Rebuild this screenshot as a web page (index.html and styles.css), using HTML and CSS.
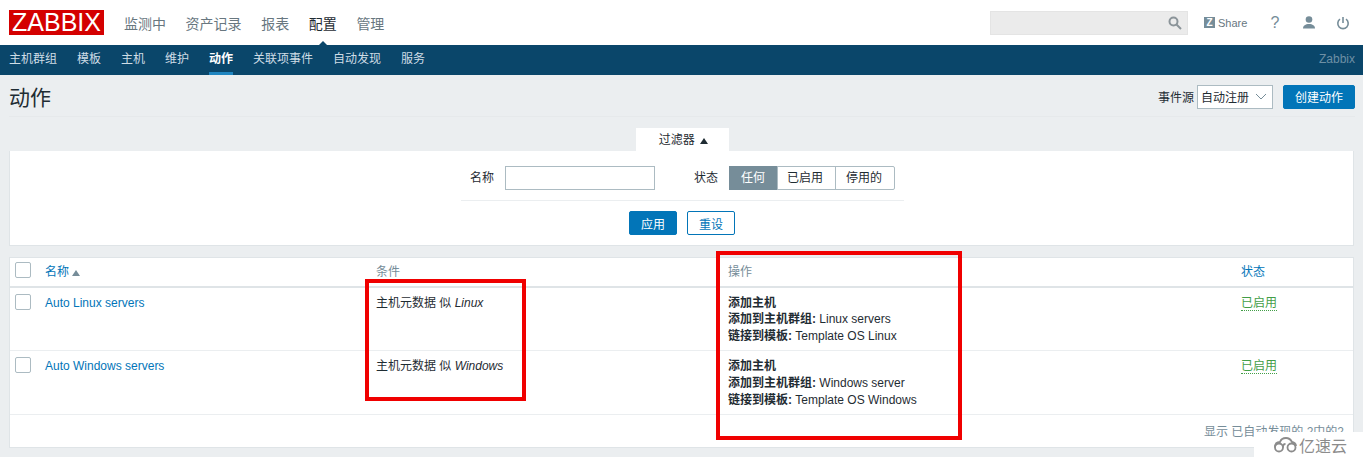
FILE: index.html
```html
<!DOCTYPE html>
<html lang="zh">

<head>
    <meta charset="UTF-8">
    <meta name="viewport" content="width=device-width">
    <title>动作</title>
    <link rel="stylesheet" href="styles.css">
</head>

<body>
    <header class="topbar">
        <a href="#" class="logo">ZABBIX</a>
        <nav class="mainnav">
            <a href="#">监测中</a>
            <a href="#">资产记录</a>
            <a href="#">报表</a>
            <a href="#" class="current">配置</a>
            <a href="#">管理</a>
        </nav>
        <div class="tools">
            <div class="search">
                <svg width="14" height="14" viewBox="0 0 14 14" fill="none" stroke="#8b9499" stroke-width="2">
                    <circle cx="5.500" cy="5.500" r="4"/>
                    <path d="M8.500 8.500 13 13"/>
                </svg>
            </div>
            <a href="#" class="share"><span class="share-z">Z</span>Share</a>
            <a href="#" class="tool help">?</a>
            <a href="#" class="tool">
                <svg width="14" height="13" viewBox="0 0 14 13" fill="#768d99">
                    <circle cx="7" cy="3.500" r="3.300"/>
                    <path d="M1 12.500c0-3 2.500-4.500 6-4.500s6 1.500 6 4.500z"/>
                </svg>
            </a>
            <a href="#" class="tool">
                <svg width="14" height="14" viewBox="0 0 14 14" fill="none" stroke="#768d99" stroke-width="1.600">
                    <path d="M4 3.200a5.200 5.200 0 1 0 6 0"/>
                    <path d="M7 1v6"/>
                </svg>
            </a>
        </div>
    </header>

    <nav class="subnav">
        <a href="#">主机群组</a>
        <a href="#">模板</a>
        <a href="#">主机</a>
        <a href="#">维护</a>
        <a href="#" class="active">动作</a>
        <a href="#">关联项事件</a>
        <a href="#">自动发现</a>
        <a href="#">服务</a>
        <span class="server">Zabbix</span>
    </nav>

    <main class="content">
        <div class="title-row">
            <h1>动作</h1>
            <label class="source">事件源
                <span class="select">自动注册
                    <svg width="12" height="7" viewBox="0 0 12 7" fill="none" stroke="#768d99">
                        <path d="M1 1l5 5 5-5"/>
                    </svg>
                </span>
            </label>
            <button class="btn" type="button">创建动作</button>
        </div>

        <div class="filter-tab">过滤器 <span class="arrow-up"></span></div>
        <form class="filter">
            <div class="filter-fields">
                <label class="field-label">名称</label>
                <input class="text-input" type="text">
                <label class="field-label status-label">状态</label>
                <div class="segments">
                    <span class="on">任何</span>
                    <span>已启用</span>
                    <span>停用的</span>
                </div>
            </div>
            <div class="filter-actions">
                <button class="btn" type="button">应用</button>
                <button class="btn btn-alt" type="button">重设</button>
            </div>
        </form>

        <div class="panel">
            <table>
                <thead>
                    <tr>
                        <th class="col-check"><span class="checkbox"></span></th>
                        <th class="col-name"><a href="#">名称</a><span class="sort"></span></th>
                        <th class="col-cond">条件</th>
                        <th class="col-oper">操作</th>
                        <th><a href="#">状态</a></th>
                    </tr>
                </thead>
                <tbody>
                    <tr>
                        <td><span class="checkbox"></span></td>
                        <td><a href="#">Auto Linux servers</a></td>
                        <td>主机元数据 似 <i>Linux</i></td>
                        <td><b>添加主机</b><br><b>添加到主机群组:</b> Linux servers<br><b>链接到模板:</b> Template OS Linux</td>
                        <td><a href="#" class="enabled">已启用</a></td>
                    </tr>
                    <tr>
                        <td><span class="checkbox"></span></td>
                        <td><a href="#">Auto Windows servers</a></td>
                        <td>主机元数据 似 <i>Windows</i></td>
                        <td><b>添加主机</b><br><b>添加到主机群组:</b> Windows server<br><b>链接到模板:</b> Template OS Windows</td>
                        <td><a href="#" class="enabled">已启用</a></td>
                    </tr>
                </tbody>
            </table>
            <div class="paging">显示 已自动发现的 2中的2</div>
        </div>
    </main>

    <!-- marcas rojas y marca de agua encima de la captura -->
    <div class="mark mark-cond"></div>
    <div class="mark mark-oper"></div>
    <div class="watermark">
        <svg width="25" height="16" viewBox="0 0 25 16" fill="none" stroke="#8c8c8c" stroke-width="1.800">
            <circle cx="6" cy="10.500" r="4"/>
            <circle cx="18.500" cy="10.500" r="4"/>
            <path d="M2 10.500C2 6 5 5 7 5c1-3 4-4 6-4 3 0 5 2 6 4 2 0 4 2 4 4"/>
            <path d="M10 10.500C10 8 11 7 12.500 7"/>
        </svg>
        <span>亿速云</span>
    </div>
</body>

</html>
```

FILE: styles.css
```css
* {
    box-sizing: border-box;
}

html,
body {
    height: 457px;
    overflow: hidden;
}

body {
    margin: 0;
    position: relative;
    font-family: "Liberation Sans", "Noto Sans CJK SC", sans-serif;
    font-size: 12px;
    color: #1f2c33;
    background-color: #ebeef0;
}

a {
    text-decoration: none;
    color: inherit;
}

.topbar {
    height: 45px;
    background-color: #fff;
    display: flex;
    align-items: center;
    padding: 0 9px;
}

.logo {
    width: 95px;
    height: 25px;
    background-color: #d40000;
    color: #fff;
    font-size: 25px;
    line-height: 25px;
    text-align: center;
}

.mainnav {
    display: flex;
    gap: 19.600px;
    margin-left: 20px;
    font-size: 14px;
    color: #68777f;
}

.mainnav a.current {
    color: #1f2c33;
    position: relative;
}

.mainnav a.current::after {
    content: "";
    position: absolute;
    left: 7px;
    bottom: -15px;
    border: 7px solid transparent;
    border-top: 0;
    border-bottom-color: #0a466a;
}

.tools {
    margin-left: auto;
    display: flex;
    align-items: center;
}

.search {
    width: 198px;
    height: 24px;
    background-color: #ebebeb;
    border: 1px solid #e4e4e4;
    display: flex;
    align-items: center;
    justify-content: flex-end;
    padding-right: 5px;
}

.share {
    display: flex;
    align-items: center;
    gap: 3px;
    margin-left: 16px;
    width: 50px;
    font-size: 11px;
    color: #68777f;
}

.share-z {
    width: 11px;
    height: 11px;
    flex-shrink: 0;
    background-color: #768d99;
    color: #fff;
    font-size: 10px;
    font-weight: bold;
    line-height: 11px;
    text-align: center;
}

.tool {
    width: 14px;
    margin-left: 20px;
    display: flex;
    justify-content: center;
    color: #768d99;
}

.tool:last-child {
    margin-right: 4px;
}

.help {
    font-size: 16px;
    margin-left: 14px;
}

.subnav {
    height: 30px;
    background-color: #0a466a;
    color: #cfdde6;
    display: flex;
    gap: 20px;
    padding: 0 8px 0 9px;
    line-height: 29px;
}

.subnav a.active {
    color: #fff;
    font-weight: bold;
    box-shadow: inset 0 -3px 0 #1f85c0;
}

.server {
    margin-left: auto;
    color: #6e90a5;
}

.content {
    padding: 0 9px;
}

.title-row {
    height: 42px;
    margin: 0 -1px 11px 0;
    display: flex;
    align-items: center;
    gap: 10px;
    padding-top: 2px;
    border-bottom: 1px solid #e6e9eb;
}

h1 {
    margin: -2px auto 0 0;
    font-size: 21px;
    font-weight: normal;
    color: #1f2c33;
}

.source {
    display: flex;
    align-items: center;
    gap: 3px;
}

.select {
    width: 76px;
    height: 24px;
    background-color: #fff;
    border: 1px solid #acbbc2;
    display: flex;
    align-items: center;
    justify-content: space-between;
    padding: 0 5px 0 3px;
}

.btn {
    height: 24px;
    padding: 0 11px;
    font: inherit;
    color: #fff;
    background-color: #0275b8;
    border: 1px solid #0275b8;
    border-radius: 2px;
}

.btn-alt {
    color: #0275b8;
    background-color: #fff;
}

.filter-tab {
    width: 93px;
    height: 23px;
    margin: 0 auto;
    background-color: #fff;
    text-align: center;
    line-height: 25px;
    position: relative;
    left: 1px;
    padding-left: 2px;
}

.arrow-up {
    display: inline-block;
    margin-left: 2px;
    border: 4px solid transparent;
    border-top: 0;
    border-bottom: 6px solid #1f2c33;
}

.filter {
    height: 95px;
    background-color: #fff;
    border: 1px solid #dfe4e7;
    border-top: 0;
    margin-bottom: 11px;
    display: flex;
    flex-direction: column;
    align-items: center;
}

.filter-fields {
    width: 443px;
    height: 50px;
    padding-top: 15px;
    display: flex;
    align-items: flex-start;
    border-bottom: 1px solid #ebeef0;
    position: relative;
    left: 1px;
}

.field-label {
    margin-left: 9px;
    margin-right: 11px;
    line-height: 24px;
}

.text-input {
    width: 150px;
    height: 24px;
    border: 1px solid #acbbc2;
    background-color: #fff;
}

.status-label {
    margin-left: 39px;
    margin-right: 11px;
}

.segments {
    display: flex;
    height: 24px;
    line-height: 22px;
    border: 1px solid #acbbc2;
    border-radius: 2px;
}

.segments span {
    padding: 0 12px 0 9px;
    border-left: 1px solid #acbbc2;
}

.segments span:last-child {
    padding: 0 12px 0 10px;
}

.segments .on {
    background-color: #768d99;
    color: #fff;
    margin: -1px 0 -1px -1px;
    line-height: 24px;
    padding: 0 12px;
    border-left: 0;
}

.filter-actions {
    display: flex;
    gap: 10px;
    padding: 10px 0 0 1px;
}

.panel {
    height: 191px;
    background-color: #fff;
    border: 1px solid #dfe4e7;
}

table {
    width: 100%;
    border-collapse: separate;
    border-spacing: 0;
    table-layout: fixed;
}

th {
    height: 30px;
    font-weight: normal;
    text-align: left;
    color: #768d99;
    border-bottom: 2px solid #dfe4e7;
    vertical-align: middle;
    padding: 0 0 4px;
}

th a,
td a {
    color: #0275b8;
}

td {
    height: 63px;
    padding: 7px 0 5px;
    line-height: 16.400px;
    vertical-align: top;
    border-bottom: 1px solid #ebeef0;
}

tbody tr:last-child td {
    height: 64px;
    line-height: 17px;
}

.col-check {
    width: 35px;
}

.col-name {
    width: 331px;
}

.col-cond {
    width: 352px;
}

.col-oper {
    width: 513px;
}

.checkbox {
    display: block;
    width: 16px;
    height: 16px;
    margin-left: 5px;
    border: 1px solid #acbbc2;
    border-radius: 2px;
    background-color: #fff;
}

td .checkbox {
    margin-top: -1px;
}

.sort {
    display: inline-block;
    margin-left: 3px;
    border: 4px solid transparent;
    border-top: 0;
    border-bottom: 6px solid #768d99;
}

td a.enabled {
    color: #429e47;
    border-bottom: 1px dotted #429e47;
}

.paging {
    text-align: right;
    padding: 7px 9px 0 0;
    color: #768d99;
}

.mark {
    position: absolute;
    border: 4px solid #f00000;
}

.mark-cond {
    left: 365px;
    top: 279px;
    width: 161px;
    height: 122px;
}

.mark-oper {
    left: 716px;
    top: 251px;
    width: 246px;
    height: 189px;
}

.watermark {
    position: absolute;
    right: 0;
    bottom: 0;
    width: 109px;
    height: 25px;
    background-color: #fff;
    display: flex;
    align-items: center;
    gap: 1px;
    padding-left: 19px;
    color: #8c8c8c;
    font-size: 16px;
}
```
